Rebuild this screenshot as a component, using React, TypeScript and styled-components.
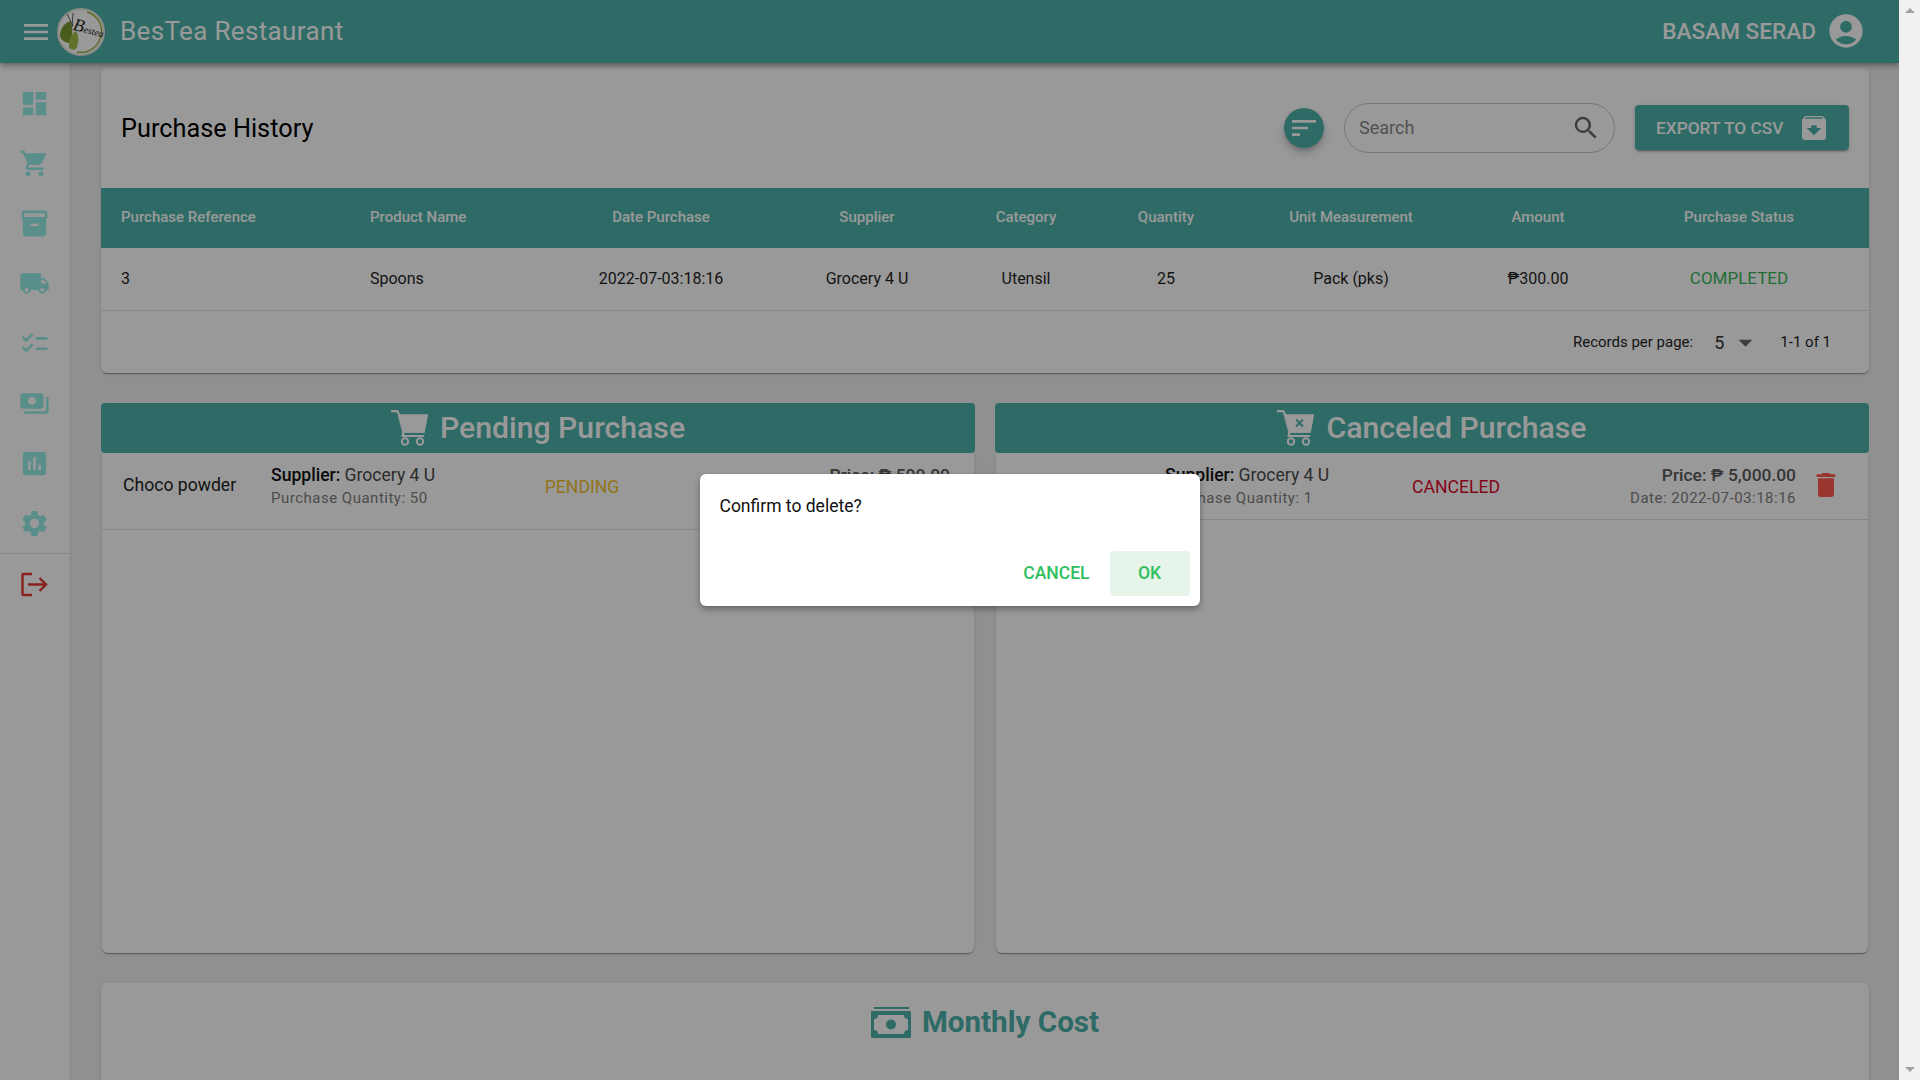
import React from 'react';
import styled, { createGlobalStyle } from 'styled-components';
import {
  MdAccountCircle,
  MdArchive,
  MdArrowDropDown,
  MdAssessment,
  MdChecklist,
  MdDashboard,
  MdDelete,
  MdInventory2,
  MdLocalShipping,
  MdMenu,
  MdPayments,
  MdSearch,
  MdSettings,
  MdShoppingCart,
  MdSort,
} from 'react-icons/md';

const TEAL = '#4db2aa';

const GlobalStyle = createGlobalStyle`
  html, body {
    margin: 0;
    height: 100%;
    overflow: hidden;
    font-family: Roboto, "Liberation Sans", sans-serif;
    background: #f1f1f1;
  }
  * {
    box-sizing: border-box;
  }
`;

const Viewport = styled.div`
  display: flex;
  width: 1920px;
  height: 1080px;
  overflow: hidden;
`;

const Page = styled.div`
  position: relative;
  width: 1899px;
  height: 1080px;
  overflow: hidden;
  display: flex;
  flex-direction: column;
  background: #f0f0f0;
`;

const ScrollTrack = styled.div`
  flex: 1;
  display: flex;
  flex-direction: column;
  justify-content: space-between;
  align-items: center;
  padding: 8px 0;
  background: #f1f1f1;
`;

const ScrollArrow = styled.span<{ $down?: boolean }>`
  width: 0;
  height: 0;
  border-left: 5px solid transparent;
  border-right: 5px solid transparent;
  ${(p) => (p.$down ? 'border-top: 5px solid #a3a3a3;' : 'border-bottom: 5px solid #a3a3a3;')}
`;

const Header = styled.header`
  position: relative;
  z-index: 2;
  flex: 0 0 63px;
  display: flex;
  align-items: center;
  padding: 0 33px 0 20px;
  background: ${TEAL};
  color: #fff;
  box-shadow: 0 2px 4px -1px rgba(0, 0, 0, 0.2), 0 4px 5px rgba(0, 0, 0, 0.14), 0 1px 10px rgba(0, 0, 0, 0.12);
`;

const MenuIcon = styled(MdMenu)`
  font-size: 32px;
  margin-right: 5px;
`;

const Logo = styled.svg`
  width: 48px;
  height: 48px;
  margin-right: 15px;
`;

const Brand = styled.h1`
  margin: 0 0 2px;
  flex: 1;
  font-size: 26px;
  font-weight: 400;
  letter-spacing: 0.35px;
  white-space: nowrap;
`;

const UserName = styled.span`
  font-size: 22.6px;
  font-weight: 500;
  margin-right: 10px;
`;

const UserIcon = styled(MdAccountCircle)`
  font-size: 40px;
  margin-bottom: 2px;
`;

const Body = styled.div`
  flex: 1;
  min-height: 0;
  display: flex;
`;

const Sidebar = styled.nav`
  flex: 0 0 71px;
  padding-top: 10px;
  background: #fff;
  border-right: 1px solid #e0e0e0;
`;

const NavItem = styled.div<{ $danger?: boolean }>`
  height: 60px;
  display: flex;
  align-items: center;
  justify-content: center;
  padding-right: 1px;
  font-size: 31px;
  color: ${(p) => (p.$danger ? '#e53935' : '#97ede6')};
`;

const NavDivider = styled.div`
  height: 1px;
  background: #e0e0e0;
`;

const Content = styled.main`
  flex: 1;
  min-width: 0;
  padding: 5px 30px 0;
  display: flex;
  flex-direction: column;
  gap: 30px;
`;

const Card = styled.section`
  background: #fff;
  border-radius: 6px;
  box-shadow: 0 2px 1px -1px rgba(0, 0, 0, 0.2), 0 1px 1px rgba(0, 0, 0, 0.14), 0 1px 3px rgba(0, 0, 0, 0.12);
`;

const HistoryCard = styled(Card)`
  flex: 0 0 305px;
  overflow: hidden;
`;

const TitleBar = styled.div`
  height: 120px;
  display: flex;
  align-items: center;
  gap: 20px;
  padding: 0 20px;
`;

const Title = styled.h2`
  flex: 1;
  margin: 0;
  font-size: 25.3px;
  font-weight: 400;
  color: #000;
`;

const FilterButton = styled.button`
  width: 40px;
  height: 40px;
  padding: 0;
  border: 0;
  border-radius: 50%;
  display: flex;
  align-items: center;
  justify-content: center;
  background: ${TEAL};
  color: #fff;
  font-size: 32px;
  box-shadow: 0 3px 5px -1px rgba(0, 0, 0, 0.2), 0 6px 10px rgba(0, 0, 0, 0.14);
`;

const SearchBox = styled.label`
  width: 271px;
  height: 50px;
  display: flex;
  align-items: center;
  padding: 0 13px 0 14px;
  border: 1px solid #c4c4c4;
  border-radius: 25px;
  font-size: 30px;
  color: #666;
`;

const SearchInput = styled.input`
  flex: 1;
  min-width: 0;
  border: 0;
  outline: 0;
  padding: 0 0 2px;
  background: transparent;
  font: 400 18px Roboto, sans-serif;
  &::placeholder {
    color: #888;
    opacity: 1;
  }
`;

const ExportButton = styled.button`
  width: 214px;
  height: 45px;
  margin-top: -1px;
  padding: 0 19px 0 21px;
  border: 0;
  border-radius: 4px;
  display: flex;
  align-items: center;
  justify-content: space-between;
  background: ${TEAL};
  color: #fff;
  font: 500 17.3px Roboto, sans-serif;
  box-shadow: 0 3px 1px -2px rgba(0, 0, 0, 0.2), 0 2px 2px rgba(0, 0, 0, 0.14), 0 1px 5px rgba(0, 0, 0, 0.12);
`;

const ExportIcon = styled(MdArchive)`
  font-size: 32px;
`;

const TableGrid = styled.div`
  display: grid;
  grid-template-columns: 249px 193px 236px 176px 142px 138px 232px 142px 260px;
  align-items: center;
`;

const TableHead = styled(TableGrid)`
  height: 60px;
  padding-bottom: 2px;
  background: ${TEAL};
  color: #fff;
  font-size: 15px;
  font-weight: 500;
`;

const TableRow = styled(TableGrid)`
  height: 63px;
  padding-bottom: 2px;
  font-size: 16px;
  color: #1f1f1f;
  border-bottom: 1px solid #e0e0e0;
`;

const Cell = styled.div<{ $left?: boolean; $pad?: number; $color?: string; $size?: number }>`
  text-align: ${(p) => (p.$left ? 'left' : 'center')};
  padding-left: ${(p) => p.$pad ?? 0}px;
  ${(p) => (p.$color ? `color: ${p.$color};` : '')}
  ${(p) => (p.$size ? `font-size: ${p.$size}px;` : '')}
`;

const Pagination = styled.div`
  height: 62px;
  display: flex;
  align-items: center;
  justify-content: flex-end;
  padding-right: 38px;
  font-size: 15px;
  color: #1f1f1f;
`;

const PageSize = styled.span`
  display: flex;
  align-items: center;
  margin: 0 18px 0 21px;
  font-size: 18px;
  color: #333;
`;

const PageSizeArrow = styled(MdArrowDropDown)`
  font-size: 33px;
  margin-left: 5px;
  color: #666;
`;

const PanelRow = styled.div`
  flex: 0 0 550px;
  display: grid;
  grid-template-columns: 874px 874px;
  gap: 20px;
`;

const Panel = styled.section`
  display: flex;
  flex-direction: column;
`;

const PanelHead = styled.div`
  flex: 0 0 50px;
  position: relative;
  z-index: 1;
  display: flex;
  align-items: center;
  justify-content: center;
  gap: 12px;
  padding-bottom: 1px;
  border-radius: 4px;
  background: ${TEAL};
  color: #fff;
  font-size: 30.2px;
  font-weight: 500;
`;

const PanelBody = styled(Card)`
  flex: 1;
  margin: 0 1px;
  border-radius: 0 0 6px 6px;
`;

const CartSvg = styled.svg`
  width: 37px;
  height: 37px;
`;

const Line = styled.div<{ $height: number; $statusWidth: number }>`
  height: ${(p) => p.$height}px;
  display: grid;
  grid-template-columns: 148px 215px ${(p) => p.$statusWidth}px 1fr auto;
  align-items: start;
  padding: 12px 26px 0 21px;
  border-bottom: 1px solid #e0e0e0;
`;

const ItemName = styled.div`
  margin-top: 10px;
  font-size: 17.6px;
  color: #222;
`;

const Strong = styled.span`
  font-size: 17.6px;
  font-weight: 500;
  color: #111;
`;

const Regular = styled.span`
  font-size: 17.6px;
  color: #4a4a4a;
`;

const SubText = styled.div`
  margin-top: 4px;
  font-size: 15px;
  letter-spacing: 0.5px;
  color: #808080;
`;

const Status = styled.div<{ $color: string }>`
  margin-top: 12px;
  text-align: center;
  font-size: 17.6px;
  color: ${(p) => p.$color};
`;

const PriceCol = styled.div`
  text-align: right;
  margin-right: -2px;
`;

const Price = styled.div`
  font-size: 17.4px;
  font-weight: 500;
  color: #5a5a5a;
`;

const TrashIcon = styled(MdDelete)`
  font-size: 32px;
  margin: 4px 0 0 16px;
  color: #ff5a50;
`;

const CostCard = styled(Card)`
  flex: 0 0 200px;
  padding-top: 22px;
  display: flex;
  justify-content: center;
  align-items: flex-start;
  gap: 11px;
  color: ${TEAL};
  font-size: 29.6px;
  font-weight: 700;
`;

const CostSvg = styled.svg`
  width: 40px;
  height: 32px;
  margin-top: 2px;
`;

const Overlay = styled.div`
  position: absolute;
  inset: 0;
  z-index: 10;
  display: flex;
  align-items: center;
  justify-content: center;
  background: rgba(0, 0, 0, 0.4);
`;

const Dialog = styled.div`
  width: 500px;
  height: 132px;
  display: flex;
  flex-direction: column;
  justify-content: space-between;
  padding: 22px 10px 10px 20px;
  border-radius: 6px;
  background: #fff;
  box-shadow: 0 3px 6px rgba(0, 0, 0, 0.35);
`;

const DialogText = styled.div`
  font-size: 17.5px;
  color: #111;
`;

const DialogActions = styled.div`
  display: flex;
  justify-content: flex-end;
  gap: 12px;
`;

const DialogButton = styled.button<{ $active?: boolean }>`
  height: 45px;
  min-width: 80px;
  padding: 0 8px 2px;
  border: 0;
  border-radius: 4px;
  background: ${(p) => (p.$active ? '#e6f4ea' : 'transparent')};
  color: #2fbf5f;
  font: 500 17.5px Roboto, sans-serif;
`;

const navIcons = [
  MdDashboard,
  MdShoppingCart,
  MdInventory2,
  MdLocalShipping,
  MdChecklist,
  MdPayments,
  MdAssessment,
  MdSettings,
];

const columns = [
  'Purchase Reference',
  'Product Name',
  'Date Purchase',
  'Supplier',
  'Category',
  'Quantity',
  'Unit Measurement',
  'Amount',
  'Purchase Status',
];

const values = ['3', 'Spoons', '2022-07-03:18:16', 'Grocery 4 U', 'Utensil', '25', 'Pack (pks)', '₱300.00', 'COMPLETED'];

const BrandLogo = () => (
  <Logo viewBox="0 0 48 48">
    <circle cx="24" cy="24" r="23" fill="#fff" stroke="#e8e8e0" strokeWidth="2" />
    <path d="M30 4a20 20 0 0 1 12 29a20 20 0 0 1-22 11" fill="none" stroke="#9ab23c" strokeWidth="1.4" />
    <path d="M3 28c0-8 5-13 10-15c3 6 3 15 0 22c-5 0-9-3-10-7z" fill="#7c9a2e" />
    <path d="M12 40c-1-7 2-14 7-17c3 5 3 13 0 18c-2 1-5 1-7-1z" fill="#a4bf4a" />
    <path d="M10 6l6 12M16 5l-1 14" stroke="#333" strokeWidth="0.8" fill="none" />
    <text x="15" y="24" transform="rotate(14 24 24)" fontFamily="'Liberation Serif', serif" fontStyle="italic" fontSize="10" fill="#222">
      <tspan fontSize="18">B</tspan>estea
    </text>
  </Logo>
);

const LogoutIcon = () => (
  <svg width="31" height="31" viewBox="0 0 31 31" fill="none" stroke="currentColor" strokeWidth="2.4">
    <path d="M13 5H4.5a1 1 0 0 0-1 1v19a1 1 0 0 0 1 1H13" />
    <path d="M9 15.5h18M20.5 9l6.5 6.5-6.5 6.5" />
  </svg>
);

const BigCart = ({ cross }: { cross?: boolean }) => (
  <CartSvg viewBox="0 0 37 37" fill="currentColor">
    <path d="M0 1h7l2.3 4.5H37l-3.4 18.2H13.5l-.4 2.2h20v2.2H10.3l.9-5L6 3.2H0z" />
    <path d="M8.5 5.5h28.5L33.6 23.7H12.4z" />
    <circle cx="14" cy="32.5" r="3.2" fill="none" stroke="currentColor" strokeWidth="2" />
    <circle cx="29" cy="32.5" r="3.2" fill="none" stroke="currentColor" strokeWidth="2" />
    {cross && (
      <path d="M19 10.5l7 7M26 10.5l-7 7" stroke={TEAL} strokeWidth="1.8" fill="none" />
    )}
  </CartSvg>
);

const CostIcon = () => (
  <CostSvg viewBox="0 0 40 32" fill="currentColor">
    <rect x="3" y="0" width="35" height="2" />
    <path
      fillRule="evenodd"
      d="M1 4h38a1 1 0 0 1 1 1v25a1 1 0 0 1-1 1H1a1 1 0 0 1-1-1V5a1 1 0 0 1 1-1zm6 4a4 4 0 0 1-4 4v11a4 4 0 0 1 4 4h26a4 4 0 0 1 4-4V12a4 4 0 0 1-4-4z"
    />
    <circle cx="20" cy="17.5" r="5" />
  </CostSvg>
);

const App: React.FC = () => (
  <Viewport>
    <GlobalStyle />
    <Page>
      <Header>
        <MenuIcon />
        <BrandLogo />
        <Brand>BesTea Restaurant</Brand>
        <UserName>BASAM SERAD</UserName>
        <UserIcon />
      </Header>
      <Body>
        <Sidebar>
          {navIcons.map((Icon, index) => (
            <NavItem key={index}>
              <Icon />
            </NavItem>
          ))}
          <NavDivider />
          <NavItem $danger>
            <LogoutIcon />
          </NavItem>
        </Sidebar>
        <Content>
          <HistoryCard>
            <TitleBar>
              <Title>Purchase History</Title>
              <FilterButton aria-label="Filter">
                <MdSort />
              </FilterButton>
              <SearchBox>
                <SearchInput placeholder="Search" />
                <MdSearch />
              </SearchBox>
              <ExportButton>
                EXPORT TO CSV
                <ExportIcon />
              </ExportButton>
            </TitleBar>
            <TableHead>
              {columns.map((label, index) => (
                <Cell key={label} $left={index < 2} $pad={index < 2 ? 20 : 0}>
                  {label}
                </Cell>
              ))}
            </TableHead>
            <TableRow>
              {values.map((value, index) => (
                <Cell
                  key={value}
                  $left={index < 2}
                  $pad={index < 2 ? 20 : 0}
                  $color={index === 8 ? '#38b85a' : undefined}
                  $size={index === 8 ? 17 : undefined}
                >
                  {value}
                </Cell>
              ))}
            </TableRow>
            <Pagination>
              Records per page:
              <PageSize>
                5
                <PageSizeArrow />
              </PageSize>
              1-1 of 1
            </Pagination>
          </HistoryCard>

          <PanelRow>
            <Panel>
              <PanelHead>
                <BigCart />
                Pending Purchase
              </PanelHead>
              <PanelBody>
                <Line $height={77} $statusWidth={192}>
                  <ItemName>Choco powder</ItemName>
                  <div>
                    <Strong>Supplier:</Strong> <Regular>Grocery 4 U</Regular>
                    <SubText>Purchase Quantity: 50</SubText>
                  </div>
                  <Status $color="#f5c32f">PENDING</Status>
                  <PriceCol>
                    <Price>Price: ₱ 500.00</Price>
                  </PriceCol>
                </Line>
              </PanelBody>
            </Panel>
            <Panel>
              <PanelHead>
                <BigCart cross />
                Canceled Purchase
              </PanelHead>
              <PanelBody>
                <Line $height={67} $statusWidth={152}>
                  <ItemName />
                  <div>
                    <Strong>Supplier:</Strong> <Regular>Grocery 4 U</Regular>
                    <SubText>Purchase Quantity: 1</SubText>
                  </div>
                  <Status $color="#dc0a2d">CANCELED</Status>
                  <PriceCol>
                    <Price>Price: ₱ 5,000.00</Price>
                    <SubText>Date: 2022-07-03:18:16</SubText>
                  </PriceCol>
                  <TrashIcon />
                </Line>
              </PanelBody>
            </Panel>
          </PanelRow>

          <CostCard>
            <CostIcon />
            Monthly Cost
          </CostCard>
        </Content>
      </Body>
      <Overlay>
        <Dialog role="dialog">
          <DialogText>Confirm to delete?</DialogText>
          <DialogActions>
            <DialogButton>CANCEL</DialogButton>
            <DialogButton $active>OK</DialogButton>
          </DialogActions>
        </Dialog>
      </Overlay>
    </Page>
    <ScrollTrack>
      <ScrollArrow />
      <ScrollArrow $down />
    </ScrollTrack>
  </Viewport>
);

export default App;
